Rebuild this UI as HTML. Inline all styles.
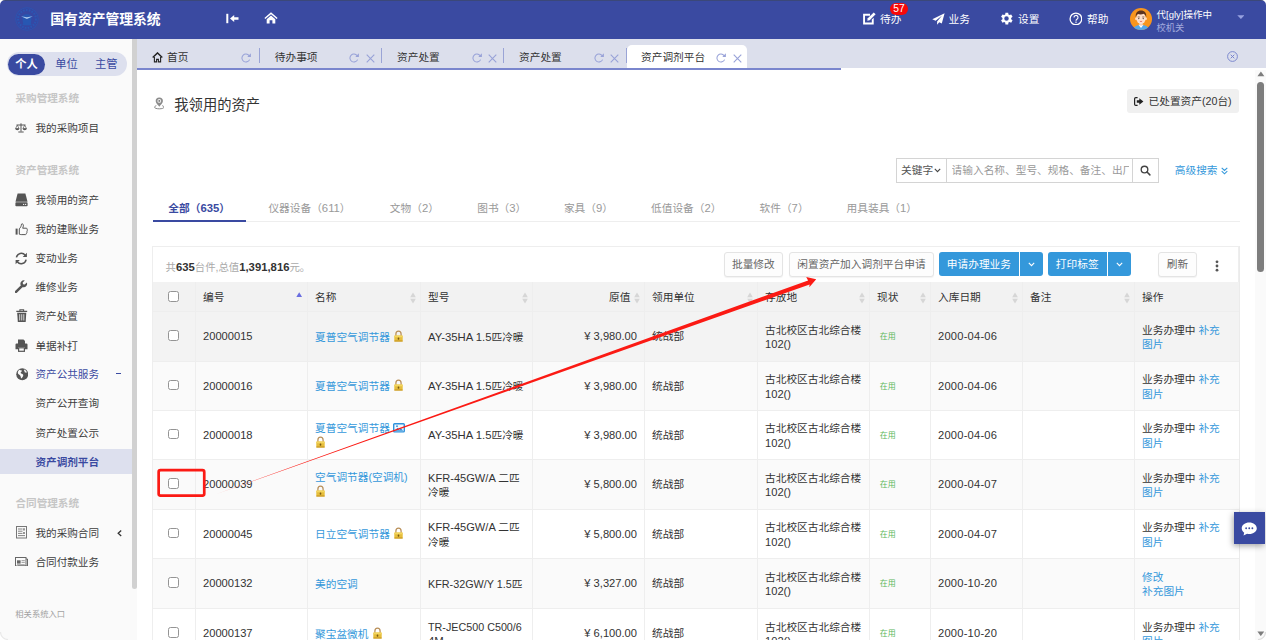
<!DOCTYPE html>
<html lang="zh-CN">
<head>
<meta charset="utf-8">
<title>国有资产管理系统</title>
<style>
*{box-sizing:border-box;margin:0;padding:0}
html,body{width:1266px;height:640px;overflow:hidden;background:#fff}
body{font-family:"Liberation Sans","Noto Sans CJK SC",sans-serif;font-size:10.7px;color:#333;position:relative}
.abs{position:absolute}
svg{display:block}
/* header */
#hdr{position:absolute;left:0;top:0;width:1266px;height:38.6px;background:#3a4aa1}
#hdr .t{position:absolute;color:#fff;white-space:nowrap}
#title{left:50.3px;top:9.1px;font-size:13.8px;font-weight:bold;line-height:22px}
.hi{position:absolute;color:#fff;font-size:10.7px;line-height:14px;top:11.5px;white-space:nowrap}
/* sidebar */
#side{position:absolute;left:0;top:39px;width:137px;height:601px;background:#fafafa}
#sthumb{position:absolute;left:132px;top:39px;width:5px;height:550px;background:#d1d1d1;border-radius:0 0 3px 3px}
#pill{position:absolute;left:7px;top:52px;width:120px;height:24px;border-radius:13px;background:#dde0ee}
#pill span{position:absolute;top:0;line-height:25.4px;font-size:11.3px;color:#3a4aa1}
#pill .on{left:1px;top:2px;width:37px;height:21px;line-height:21.6px;border-radius:11px;background:#3a4aa1;color:#fff;font-weight:bold;text-align:center}
.sg{position:absolute;left:15.5px;font-size:10.6px;font-weight:bold;color:#c6c6c6;line-height:14px;white-space:nowrap}
.si{position:absolute;left:35.5px;font-size:10.6px;color:#3d3d3d;line-height:14px;white-space:nowrap}
.sic{position:absolute;left:15px}
/* tabs */
#tabs{position:absolute;left:137px;top:39px;width:1129px;height:29px;background:#dcdfec}
#tabline{position:absolute;left:137px;top:67.5px;width:704px;height:2px;background:#7a86cd}
.tb{position:absolute;top:41.5px;height:29px;line-height:30px;font-size:10.7px;color:#333;white-space:nowrap}
.sep{position:absolute;top:47.5px;width:1px;height:15px;background:#9aa4d6}

/* content */
#ptitle{position:absolute;left:174.3px;top:94.5px;font-size:14.3px;line-height:20px;color:#333;white-space:nowrap}
#btnout{position:absolute;left:1127px;top:89px;width:112px;height:24px;background:#f0f0f0;border-radius:3px}
#btnout span{position:absolute;left:21.5px;top:0;line-height:25.4px;font-size:10.7px;color:#333;white-space:nowrap}
#sgrp{position:absolute;left:896px;top:158.3px;width:263px;height:24.4px;border:1px solid #d4d4d4;background:#fff}
#sgrp .k{position:absolute;left:4px;top:0;line-height:22.6px;font-size:10.7px;color:#555;white-space:nowrap}
#sgrp .ph{position:absolute;left:54.6px;top:0;width:177px;overflow:hidden;line-height:22.6px;font-size:10.7px;color:#999;white-space:nowrap}
#sgrp .v1{position:absolute;left:48.6px;top:0;width:1px;height:22.4px;background:#d4d4d4}
#sgrp .v2{position:absolute;left:234.6px;top:0;width:1px;height:22.4px;background:#d4d4d4}
#adv{position:absolute;left:1174.8px;top:163px;line-height:15px;font-size:10.7px;color:#3498db;white-space:nowrap}
.nt{position:absolute;top:200px;line-height:16px;font-size:10.7px;color:#999;white-space:nowrap}
#navline{position:absolute;left:152.7px;top:221px;width:1087px;height:1px;background:#eee}
#navon{position:absolute;left:152.7px;top:220.4px;width:93px;height:2px;background:#3a4aa1}
#panel{position:absolute;left:152.2px;top:246px;width:1087px;height:400px;border:1px solid #eee;border-bottom:0}
#sum{position:absolute;left:165.5px;top:260px;line-height:15px;font-size:10.4px;color:#aaa;white-space:nowrap}
#sum b{color:#333;font-size:11.3px}
.bt{position:absolute;top:252.2px;height:24.4px;line-height:22.6px;font-size:10.7px;text-align:center;white-space:nowrap;border-radius:3px;border:1px solid #e4e4e4;background:#fdfdfd;color:#666;box-shadow:0 1px 1px rgba(0,0,0,.05)}
.bb{position:absolute;top:252.3px;height:24.1px;line-height:24.3px;font-size:10.7px;text-align:center;white-space:nowrap;background:#3498db;color:#fff}
/* grid */
#grid{position:absolute;left:153px;top:282px;width:1086px;height:358px;overflow:hidden}
.r{position:absolute;left:0;width:1086px;height:49.45px;border-top:1px solid #eee}
.r.h{height:29px;background:#f2f2f2;border-top:0;top:0}
.c{position:absolute;top:0;height:100%;border-left:1px solid #eee;display:flex;align-items:center;padding:0 7px;font-size:10.7px;line-height:14.8px;white-space:nowrap;color:#333}
.r.h .c{font-size:10.7px;padding-top:1.6px}
.c:first-child{border-left:0}
.c>div{position:relative;top:0.8px}
.c a,.lk{color:#3498db;text-decoration:none}
.cb{display:block;width:10.6px;height:10.6px;border:1px solid #949494;border-radius:2.5px;background:#fff;margin:0 auto;position:relative;left:-0.5px;top:-0.9px}
.st{font-size:8px;color:#5cb85c;position:relative;top:1.2px;margin-left:2.8px}
.num{justify-content:flex-end}
.r.h .num{padding-right:13.6px}
.srt{position:absolute;right:4.5px;top:50%;margin-top:-5.5px}
.d{font-size:11.15px}
.m{font-size:11.4px}
.nt i{font-style:normal;font-size:11.3px}
</style>
</head>
<body>
<div id="hdr">
  <svg class="abs" style="left:14.5px;top:7px" width="24" height="24" viewBox="0 0 24 24"><circle cx="12" cy="12" r="11.3" fill="#3648a3" stroke="#2c55b1" stroke-width="0.9"/><circle cx="12" cy="12" r="8.9" fill="none" stroke="#2b57b3" stroke-width="2" stroke-dasharray="1.6 1.3"/><path d="M7.2 9.2C9 7.6 10.6 7.3 12 7.3s3 0.3 4.8 1.9l-0.9 7.4 0.9 1.6H7.2l0.9-1.6z" fill="#2757b2"/><path d="M6 9.2l5.9 1.1 5.9-1.1-5.9 2.7z" fill="#a9c6ee"/></svg>
  <div id="title" class="t">国有资产管理系统</div>

  <svg class="abs" style="left:226px;top:12.5px" width="13" height="11" viewBox="0 0 13 11"><rect x="0.3" y="0.8" width="2" height="9.4" fill="#fff"/><path d="M4 5.5l4.2-3.6v2.3h4.3v2.6H8.2v2.3z" fill="#fff"/></svg>
  <svg class="abs" style="left:264px;top:12px" width="14" height="12" viewBox="0 0 14 12"><path d="M7 0.3l6.6 5.6-0.9 1.1L7 2.3 1.3 7 0.4 5.9z" fill="#fff"/><path d="M7 3.6l4.3 3.6v4.3H8.4V8.2H5.6v3.3H2.7V7.2z" fill="#fff"/></svg>
  <svg class="abs" style="left:861.7px;top:10.8px" width="14.5" height="14.5" viewBox="0 0 13 13"><path d="M1 2.5h6.2v1.7H2.7v6.1h6.1V7.7l1.7-1.7v6H1z" fill="#fff"/><path d="M5.2 6.6l5.3-5.3 1.7 1.7-5.3 5.3-2.2 0.5z" fill="#fff"/></svg>
  <div class="hi" style="left:880px">待办</div>
  <div class="abs" style="left:890px;top:3.4px;width:18.2px;height:12px;border-radius:6px;background:#f80808;color:#fff;font-size:10.3px;line-height:12px;text-align:center">57</div>
  <svg class="abs" style="left:932px;top:13px" width="13" height="12" viewBox="0 0 13 12"><path d="M12.6 0.2L0.3 6.3l3.3 1.4 6.5-5.2-5 6v3.2l2.1-2.4 2.6 1.1z" fill="#fff"/></svg>
  <div class="hi" style="left:948.5px">业务</div>
  <svg class="abs" style="left:998.9px;top:10.8px" width="15" height="15" viewBox="0 0 24 24"><path d="M19.4 13a7.6 7.6 0 0 0 0-2l2.3-1.8-2.2-3.8-2.7 1.1a7.6 7.6 0 0 0-1.7-1L14.7 2.6h-4.4L9.9 5.5a7.6 7.6 0 0 0-1.7 1L5.5 5.4 3.3 9.2 5.6 11a7.6 7.6 0 0 0 0 2l-2.3 1.8 2.2 3.8 2.7-1.1a7.6 7.6 0 0 0 1.7 1l0.4 2.9h4.4l0.4-2.9a7.6 7.6 0 0 0 1.7-1l2.7 1.1 2.2-3.8zM12 15.6a3.6 3.6 0 1 1 0-7.2 3.6 3.6 0 0 1 0 7.2z" fill="#fff"/></svg>
  <div class="hi" style="left:1018px">设置</div>
  <svg class="abs" style="left:1068.6px;top:11.5px" width="13.8" height="13.8" viewBox="0 0 13 13"><circle cx="6.5" cy="6.5" r="5.5" fill="none" stroke="#fff" stroke-width="1.2"/><path d="M4.7 5.2a1.9 1.9 0 1 1 2.8 1.6c-0.6 0.4-0.9 0.7-0.9 1.4" fill="none" stroke="#fff" stroke-width="1.1"/><rect x="6" y="9" width="1.2" height="1.2" fill="#fff"/></svg>
  <div class="hi" style="left:1087px">帮助</div>
  <svg class="abs" style="left:1129.6px;top:8.3px" width="22" height="22" viewBox="0 0 23 23"><defs><clipPath id="avc"><circle cx="11.5" cy="11.5" r="11.5"/></clipPath></defs><g clip-path="url(#avc)"><rect width="23" height="23" fill="#f8951d"/><path d="M3.5 23c0-3.6 3-5.2 8-5.2s8 1.6 8 5.2z" fill="#56a8ea"/><path d="M8.8 17.6l2.7 3.2 2.7-3.2z" fill="#fff"/><rect x="9.8" y="14" width="3.4" height="4.4" fill="#f3cdb4"/><ellipse cx="11.5" cy="10.8" rx="5" ry="5.8" fill="#fde0cc"/><ellipse cx="6.3" cy="11.3" rx="0.9" ry="1.3" fill="#fde0cc"/><ellipse cx="16.7" cy="11.3" rx="0.9" ry="1.3" fill="#fde0cc"/><path d="M6.1 9.8c-0.7-4.6 1.8-7.3 5.4-7.3s6.1 2.7 5.4 7.3c-0.5-2-1.4-3.2-2.6-3.8-1.6 0.9-4.2 1.1-6 0.3-1.1 0.7-1.8 1.8-2.2 3.5z" fill="#5a3320"/><path d="M8 9.4h2.2M12.8 9.4H15" stroke="#5a3320" stroke-width="0.7"/><circle cx="9.2" cy="11" r="0.65" fill="#3a2a22"/><circle cx="13.8" cy="11" r="0.65" fill="#3a2a22"/><path d="M10.3 13.8q1.2 0.9 2.4 0" fill="none" stroke="#e0564e" stroke-width="0.8"/></g></svg>
  <div class="t" style="left:1156.5px;top:8px;font-size:9.5px;line-height:13px">代[gly]操作中</div>
  <div class="t" style="left:1156.5px;top:22.3px;font-size:9.3px;line-height:13px;color:#a3abde">校机关</div>
  <svg class="abs" style="left:1236.6px;top:15.4px" width="7.8" height="4.4" viewBox="0 0 9 5"><path d="M0.3 0.3h8.4L4.5 4.7z" fill="#97a2e0"/></svg>
</div>
<div id="side"></div>
<div id="sthumb"></div>
<div id="pill"><span class="on">个人</span><span style="left:48.3px">单位</span><span style="left:88px">主管</span></div>
<div id="tabs"></div>

<div class="abs" style="left:626.5px;top:45px;width:120.5px;height:23px;background:#fff;border-radius:5px 5px 0 0"></div>
<div class="tb" style="left:167px">首页</div>
<div class="tb" style="left:274.8px">待办事项</div>
<div class="tb" style="left:397px">资产处置</div>
<div class="tb" style="left:519px">资产处置</div>
<div class="tb" style="left:641px">资产调剂平台</div>
<div class="sep" style="left:259px"></div><div class="sep" style="left:381px"></div><div class="sep" style="left:503px"></div><div class="sep" style="left:625.5px"></div>
<svg class="abs" style="left:152.3px;top:52px" width="11" height="11" viewBox="0 0 11 11"><path d="M0.7 5.6L5.5 0.9 10.3 5.6" fill="none" stroke="#222" stroke-width="1.4"/><path d="M2.4 5v4.9h2.2V7.4h1.8v2.5h2.2V5" fill="none" stroke="#222" stroke-width="1.1"/></svg><svg class="abs" style="left:240.7px;top:53px" width="10.5" height="9.5" viewBox="0 0 10.5 9.5"><path d="M8.1 2.6A4 4 0 1 0 8.6 6.6" fill="none" stroke="#98a2d8" stroke-width="1.05"/><path d="M9.9 0.3v3.6H6.3z" fill="#98a2d8"/></svg><svg class="abs" style="left:349.3px;top:53px" width="10.5" height="9.5" viewBox="0 0 10.5 9.5"><path d="M8.1 2.6A4 4 0 1 0 8.6 6.6" fill="none" stroke="#98a2d8" stroke-width="1.05"/><path d="M9.9 0.3v3.6H6.3z" fill="#98a2d8"/></svg><svg class="abs" style="left:366.2px;top:53.5px" width="9" height="9" viewBox="0 0 9 9"><path d="M0.7 0.7L8.3 8.3M8.3 0.7L0.7 8.3" fill="none" stroke="#98a2d8" stroke-width="1.1"/></svg><svg class="abs" style="left:471.5px;top:53px" width="10.5" height="9.5" viewBox="0 0 10.5 9.5"><path d="M8.1 2.6A4 4 0 1 0 8.6 6.6" fill="none" stroke="#98a2d8" stroke-width="1.05"/><path d="M9.9 0.3v3.6H6.3z" fill="#98a2d8"/></svg><svg class="abs" style="left:488.2px;top:53.5px" width="9" height="9" viewBox="0 0 9 9"><path d="M0.7 0.7L8.3 8.3M8.3 0.7L0.7 8.3" fill="none" stroke="#98a2d8" stroke-width="1.1"/></svg><svg class="abs" style="left:594px;top:53px" width="10.5" height="9.5" viewBox="0 0 10.5 9.5"><path d="M8.1 2.6A4 4 0 1 0 8.6 6.6" fill="none" stroke="#98a2d8" stroke-width="1.05"/><path d="M9.9 0.3v3.6H6.3z" fill="#98a2d8"/></svg><svg class="abs" style="left:610.3px;top:53.5px" width="9" height="9" viewBox="0 0 9 9"><path d="M0.7 0.7L8.3 8.3M8.3 0.7L0.7 8.3" fill="none" stroke="#98a2d8" stroke-width="1.1"/></svg><svg class="abs" style="left:715.5px;top:53px" width="10.5" height="9.5" viewBox="0 0 10.5 9.5"><path d="M8.1 2.6A4 4 0 1 0 8.6 6.6" fill="none" stroke="#98a2d8" stroke-width="1.05"/><path d="M9.9 0.3v3.6H6.3z" fill="#98a2d8"/></svg><svg class="abs" style="left:732.6px;top:53.5px" width="9" height="9" viewBox="0 0 9 9"><path d="M0.7 0.7L8.3 8.3M8.3 0.7L0.7 8.3" fill="none" stroke="#98a2d8" stroke-width="1.1"/></svg><svg class="abs" style="left:1227.3px;top:50.9px" width="11" height="11" viewBox="0 0 11 11"><circle cx="5.5" cy="5.5" r="4.9" fill="none" stroke="#7380cc" stroke-width="0.9"/><path d="M3.7 3.7l3.6 3.6M7.3 3.7L3.7 7.3" stroke="#7380cc" stroke-width="0.95"/></svg>
<div id="tabline"></div>
<div class="sg" style="top:91.4px">采购管理系统</div>
<div class="si" style="top:121.2px">我的采购项目</div>
<div class="sg" style="top:163.2px">资产管理系统</div>
<div class="si" style="top:192.5px">我领用的资产</div>
<div class="si" style="top:222.3px">我的建账业务</div>
<div class="si" style="top:251.2px">变动业务</div>
<div class="si" style="top:279.7px">维修业务</div>
<div class="si" style="top:309.4px">资产处置</div>
<div class="si" style="top:338.5px">单据补打</div>
<div class="si" style="top:367.2px;color:#3a4aa1">资产公共服务</div>
<div class="si" style="top:396.3px">资产公开查询</div>
<div class="si" style="top:425.8px">资产处置公示</div>
<div class="abs" style="left:0;top:449px;width:132px;height:25px;background:#dde0ee"></div>
<div class="si" style="top:454.9px;color:#3a4aa1;font-weight:bold">资产调剂平台</div>
<div class="sg" style="top:496.2px">合同管理系统</div>
<div class="si" style="top:525.7px">我的采购合同</div>
<div class="si" style="top:554.8px">合同付款业务</div>
<div class="abs" style="left:15.3px;top:608px;font-size:8.3px;line-height:12px;color:#a2a2a2">相关系统入口</div>
<div class="abs" style="left:116.3px;top:373.2px;width:4.6px;height:1.2px;background:#3a4aa1"></div>
<svg class="abs" style="left:116.6px;top:529.6px" width="5" height="7" viewBox="0 0 5 7"><path d="M4.2 0.6L1.2 3.3 4.2 6" fill="none" stroke="#333" stroke-width="1.3"/></svg>

<svg class="abs" style="left:153.8px;top:97.4px" width="10.6" height="12.4" viewBox="0 0 11 13"><path d="M5.5 0.4a3.8 3.8 0 0 1 3.8 3.8c0 2.3-2.3 3.9-3.8 6C4 8.1 1.7 6.5 1.7 4.2A3.8 3.8 0 0 1 5.5 0.4z" fill="#8c8c8c"/><circle cx="5.5" cy="4.1" r="2" fill="#f4f4f4"/><circle cx="5.5" cy="4.1" r="1" fill="#777"/><path d="M2.4 9.1C1.2 9.5 0.5 10 0.5 10.7c0 1 2.2 1.7 5 1.7s5-0.7 5-1.7c0-0.7-0.7-1.2-1.9-1.6" fill="none" stroke="#777" stroke-width="0.9"/></svg>
<div id="ptitle">我领用的资产</div>
<div id="btnout"><svg class="abs" style="left:7.3px;top:8.3px" width="10" height="9" viewBox="0 0 10 9"><path d="M3.6 0.6H1.8A1.2 1.2 0 0 0 0.6 1.8v5.4a1.2 1.2 0 0 0 1.2 1.2h1.8" fill="none" stroke="#222" stroke-width="1.2"/><path d="M5.3 1.3L9.4 4.5 5.3 7.7V5.7H2.8V3.3h2.5z" fill="#222"/></svg><span>已处置资产(20台)</span></div>
<div id="sgrp"><span class="k">关键字</span><svg class="abs" style="left:36.5px;top:9px" width="7" height="5" viewBox="0 0 7 5"><path d="M0.8 0.8L3.5 3.6 6.2 0.8" fill="none" stroke="#444" stroke-width="1.1"/></svg><i class="v1"></i><span class="ph">请输入名称、型号、规格、备注、出厂编号</span><i class="v2"></i><svg class="abs" style="left:243px;top:5.5px" width="11" height="11" viewBox="0 0 11 11"><circle cx="4.5" cy="4.5" r="3.3" fill="none" stroke="#444" stroke-width="1.35"/><path d="M7 7l2.9 2.9" stroke="#444" stroke-width="1.5" stroke-linecap="round"/></svg></div>
<div id="adv">高级搜索 <svg style="display:inline-block;vertical-align:-1px" width="7" height="8" viewBox="0 0 7 8"><path d="M0.7 0.8L3.5 3.4 6.3 0.8M0.7 4.2L3.5 6.8 6.3 4.2" fill="none" stroke="#3498db" stroke-width="1.1"/></svg></div>
<div class="nt" style="left:168.3px;color:#3a4aa1;font-weight:bold">全部（<i>635</i>）</div><div class="nt" style="left:268.4px">仪器设备（<i>611</i>）</div><div class="nt" style="left:389.8px">文物（<i>2</i>）</div><div class="nt" style="left:477.2px">图书（<i>3</i>）</div><div class="nt" style="left:563.9px">家具（<i>9</i>）</div><div class="nt" style="left:651px">低值设备（<i>2</i>）</div><div class="nt" style="left:759.5px">软件（<i>7</i>）</div><div class="nt" style="left:846.6px">用具装具（<i>1</i>）</div>
<div id="navline"></div><div id="navon"></div>
<div id="panel"></div>
<div id="sum">共<b>635</b>台件,总值<b>1,391,816</b>元。</div>
<div class="bt" style="left:724px;width:58.7px">批量修改</div>
<div class="bt" style="left:789px;width:145px">闲置资产加入调剂平台申请</div>
<div class="bb" style="left:938.7px;width:80.5px;border-radius:3px 0 0 3px">申请办理业务</div>
<div class="bb" style="left:1020.3px;width:22.5px;border-radius:0 3px 3px 0"><svg class="abs" style="left:8px;top:9.5px" width="7" height="5" viewBox="0 0 7 5"><path d="M0.8 0.8L3.5 3.6 6.2 0.8" fill="none" stroke="#fff" stroke-width="1.1"/></svg></div>
<div class="bb" style="left:1047.8px;width:58.9px;border-radius:3px 0 0 3px">打印标签</div>
<div class="bb" style="left:1108.3px;width:22.5px;border-radius:0 3px 3px 0"><svg class="abs" style="left:7.5px;top:9.5px" width="7" height="5" viewBox="0 0 7 5"><path d="M0.8 0.8L3.5 3.6 6.2 0.8" fill="none" stroke="#fff" stroke-width="1.1"/></svg></div>
<div class="bt" style="left:1158.4px;width:38.2px">刷新</div>
<svg class="abs" style="left:1214.5px;top:260px" width="4" height="12" viewBox="0 0 4 12"><circle cx="2" cy="1.8" r="1.4" fill="#555"/><circle cx="2" cy="6" r="1.4" fill="#555"/><circle cx="2" cy="10.2" r="1.4" fill="#555"/></svg>
<div id="grid">
<div class="r h"><div class="c " style="left:0px;width:42px"><span class="cb"></span></div><div class="c " style="left:42px;width:112px">编号<svg class="srt" width="6.4" height="5.4" viewBox="0 0 6.4 5.4" style="margin-top:-4.7px;right:4.2px"><path d="M3.2 0.2L6.2 5.2H0.2z" fill="#6a6ee0"/></svg></div><div class="c " style="left:154px;width:113px">名称<svg class="srt" width="6" height="12" viewBox="0 0 6 12" style="margin-top:-4.8px"><path d="M3 0.4L5.8 5.2H0.2z" fill="#d6d6d6"/><path d="M3 11.6L5.8 6.8H0.2z" fill="#d6d6d6"/></svg></div><div class="c " style="left:267px;width:112px">型号<svg class="srt" width="6" height="12" viewBox="0 0 6 12" style="margin-top:-4.8px"><path d="M3 0.4L5.8 5.2H0.2z" fill="#d6d6d6"/><path d="M3 11.6L5.8 6.8H0.2z" fill="#d6d6d6"/></svg></div><div class="c num"  style="left:379px;width:112px">原值<svg class="srt" width="6" height="12" viewBox="0 0 6 12" style="margin-top:-4.8px"><path d="M3 0.4L5.8 5.2H0.2z" fill="#d6d6d6"/><path d="M3 11.6L5.8 6.8H0.2z" fill="#d6d6d6"/></svg></div><div class="c " style="left:491px;width:113px">领用单位<svg class="srt" width="6" height="12" viewBox="0 0 6 12" style="margin-top:-4.8px"><path d="M3 0.4L5.8 5.2H0.2z" fill="#d6d6d6"/><path d="M3 11.6L5.8 6.8H0.2z" fill="#d6d6d6"/></svg></div><div class="c " style="left:604px;width:112px">存放地<svg class="srt" width="6" height="12" viewBox="0 0 6 12" style="margin-top:-4.8px"><path d="M3 0.4L5.8 5.2H0.2z" fill="#d6d6d6"/><path d="M3 11.6L5.8 6.8H0.2z" fill="#d6d6d6"/></svg></div><div class="c " style="left:716px;width:61px">现状<svg class="srt" width="6" height="12" viewBox="0 0 6 12" style="margin-top:-4.8px"><path d="M3 0.4L5.8 5.2H0.2z" fill="#d6d6d6"/><path d="M3 11.6L5.8 6.8H0.2z" fill="#d6d6d6"/></svg></div><div class="c " style="left:777px;width:92px">入库日期<svg class="srt" width="6" height="12" viewBox="0 0 6 12" style="margin-top:-4.8px"><path d="M3 0.4L5.8 5.2H0.2z" fill="#d6d6d6"/><path d="M3 11.6L5.8 6.8H0.2z" fill="#d6d6d6"/></svg></div><div class="c " style="left:869px;width:112px">备注<svg class="srt" width="6" height="12" viewBox="0 0 6 12" style="margin-top:-4.8px"><path d="M3 0.4L5.8 5.2H0.2z" fill="#d6d6d6"/><path d="M3 11.6L5.8 6.8H0.2z" fill="#d6d6d6"/></svg></div><div class="c " style="left:981px;width:105px">操作</div></div>
<div class="r" style="top:29px;height:50px;background:#f3f3f3"><div class="c " style="left:0px;width:42px"><span class="cb"></span></div><div class="c " style="left:42px;width:112px"><span class="d">20000015</span></div><div class="c " style="left:154px;width:113px"><div class="lk">夏普空气调节器 <svg style="display:inline-block;vertical-align:-0.8px;margin-left:1.4px" width="9" height="12" viewBox="0 0 9 12"><path d="M1.9 6V3.9a2.6 2.9 0 0 1 5.2 0V6" fill="none" stroke="#b98f58" stroke-width="1.25"/><rect x="0.3" y="5.6" width="8.4" height="6" rx="0.6" fill="#e6be3c"/><rect x="0.3" y="5.6" width="8.4" height="1.6" rx="0.6" fill="#f3d660"/><rect x="0.3" y="10.4" width="8.4" height="1.2" rx="0.5" fill="#c4901c"/><rect x="3.7" y="7.6" width="1.6" height="2.2" rx="0.7" fill="#7a5a14"/></svg></div></div><div class="c " style="left:267px;width:112px"><div><span class="m" style="font-size:11.3px">AY-35HA 1.5</span>匹冷暖</div></div><div class="c num" style="left:379px;width:112px"><span class="d">¥ 3,980.00</span></div><div class="c " style="left:491px;width:113px">统战部</div><div class="c " style="left:604px;width:112px"><div>古北校区古北综合楼<br><span class="d">102()</span></div></div><div class="c " style="left:716px;width:61px"><span class="st">在用</span></div><div class="c " style="left:777px;width:92px"><span class="d" style="letter-spacing:.22px">2000-04-06</span></div><div class="c " style="left:869px;width:112px"></div><div class="c " style="left:981px;width:105px"><div>业务办理中&nbsp;<span class="lk">补充</span><br><span class="lk">图片</span></div></div></div>
<div class="r" style="top:79px;height:49px;background:#fafafa"><div class="c " style="left:0px;width:42px"><span class="cb"></span></div><div class="c " style="left:42px;width:112px"><span class="d">20000016</span></div><div class="c " style="left:154px;width:113px"><div class="lk">夏普空气调节器 <svg style="display:inline-block;vertical-align:-0.8px;margin-left:1.4px" width="9" height="12" viewBox="0 0 9 12"><path d="M1.9 6V3.9a2.6 2.9 0 0 1 5.2 0V6" fill="none" stroke="#b98f58" stroke-width="1.25"/><rect x="0.3" y="5.6" width="8.4" height="6" rx="0.6" fill="#e6be3c"/><rect x="0.3" y="5.6" width="8.4" height="1.6" rx="0.6" fill="#f3d660"/><rect x="0.3" y="10.4" width="8.4" height="1.2" rx="0.5" fill="#c4901c"/><rect x="3.7" y="7.6" width="1.6" height="2.2" rx="0.7" fill="#7a5a14"/></svg></div></div><div class="c " style="left:267px;width:112px"><div><span class="m" style="font-size:11.3px">AY-35HA 1.5</span>匹冷暖</div></div><div class="c num" style="left:379px;width:112px"><span class="d">¥ 3,980.00</span></div><div class="c " style="left:491px;width:113px">统战部</div><div class="c " style="left:604px;width:112px"><div>古北校区古北综合楼<br><span class="d">102()</span></div></div><div class="c " style="left:716px;width:61px"><span class="st">在用</span></div><div class="c " style="left:777px;width:92px"><span class="d" style="letter-spacing:.22px">2000-04-06</span></div><div class="c " style="left:869px;width:112px"></div><div class="c " style="left:981px;width:105px"><div>业务办理中&nbsp;<span class="lk">补充</span><br><span class="lk">图片</span></div></div></div>
<div class="r" style="top:128px;height:49px;background:#fff"><div class="c " style="left:0px;width:42px"><span class="cb"></span></div><div class="c " style="left:42px;width:112px"><span class="d">20000018</span></div><div class="c " style="left:154px;width:113px"><div class="lk">夏普空气调节器 <svg style="display:inline-block;vertical-align:-1.2px;margin-left:0.6px" width="12" height="9.6" viewBox="0 0 12 9.6"><rect x="0.7" y="0.7" width="10.6" height="8.2" rx="0.9" fill="#f2f8fd" stroke="#2f92dc" stroke-width="1.4"/><path d="M1.8 7.8l2.7-3 1.9 1.9 1.5-1.4 2.3 2.5z" fill="#2f92dc"/><circle cx="4" cy="3.2" r="0.9" fill="#2f92dc"/></svg><br><svg style="display:inline-block;vertical-align:-0.8px;margin-left:1.4px" width="9" height="12" viewBox="0 0 9 12"><path d="M1.9 6V3.9a2.6 2.9 0 0 1 5.2 0V6" fill="none" stroke="#b98f58" stroke-width="1.25"/><rect x="0.3" y="5.6" width="8.4" height="6" rx="0.6" fill="#e6be3c"/><rect x="0.3" y="5.6" width="8.4" height="1.6" rx="0.6" fill="#f3d660"/><rect x="0.3" y="10.4" width="8.4" height="1.2" rx="0.5" fill="#c4901c"/><rect x="3.7" y="7.6" width="1.6" height="2.2" rx="0.7" fill="#7a5a14"/></svg></div></div><div class="c " style="left:267px;width:112px"><div><span class="m" style="font-size:11.3px">AY-35HA 1.5</span>匹冷暖</div></div><div class="c num" style="left:379px;width:112px"><span class="d">¥ 3,980.00</span></div><div class="c " style="left:491px;width:113px">统战部</div><div class="c " style="left:604px;width:112px"><div>古北校区古北综合楼<br><span class="d">102()</span></div></div><div class="c " style="left:716px;width:61px"><span class="st">在用</span></div><div class="c " style="left:777px;width:92px"><span class="d" style="letter-spacing:.22px">2000-04-06</span></div><div class="c " style="left:869px;width:112px"></div><div class="c " style="left:981px;width:105px"><div>业务办理中&nbsp;<span class="lk">补充</span><br><span class="lk">图片</span></div></div></div>
<div class="r" style="top:177px;height:50px;background:#fafafa"><div class="c " style="left:0px;width:42px"><span class="cb"></span></div><div class="c " style="left:42px;width:112px"><span class="d">20000039</span></div><div class="c " style="left:154px;width:113px"><div class="lk">空气调节器(空调机)<br><svg style="display:inline-block;vertical-align:-0.8px;margin-left:1.4px" width="9" height="12" viewBox="0 0 9 12"><path d="M1.9 6V3.9a2.6 2.9 0 0 1 5.2 0V6" fill="none" stroke="#b98f58" stroke-width="1.25"/><rect x="0.3" y="5.6" width="8.4" height="6" rx="0.6" fill="#e6be3c"/><rect x="0.3" y="5.6" width="8.4" height="1.6" rx="0.6" fill="#f3d660"/><rect x="0.3" y="10.4" width="8.4" height="1.2" rx="0.5" fill="#c4901c"/><rect x="3.7" y="7.6" width="1.6" height="2.2" rx="0.7" fill="#7a5a14"/></svg></div></div><div class="c " style="left:267px;width:112px"><div><span class="m" style="font-size:11.1px">KFR-45GW/A </span>二匹<br>冷暖</div></div><div class="c num" style="left:379px;width:112px"><span class="d">¥ 5,800.00</span></div><div class="c " style="left:491px;width:113px">统战部</div><div class="c " style="left:604px;width:112px"><div>古北校区古北综合楼<br><span class="d">102()</span></div></div><div class="c " style="left:716px;width:61px"><span class="st">在用</span></div><div class="c " style="left:777px;width:92px"><span class="d" style="letter-spacing:.22px">2000-04-07</span></div><div class="c " style="left:869px;width:112px"></div><div class="c " style="left:981px;width:105px"><div>业务办理中&nbsp;<span class="lk">补充</span><br><span class="lk">图片</span></div></div></div>
<div class="r" style="top:227px;height:49px;background:#fff"><div class="c " style="left:0px;width:42px"><span class="cb"></span></div><div class="c " style="left:42px;width:112px"><span class="d">20000045</span></div><div class="c " style="left:154px;width:113px"><div class="lk">日立空气调节器 <svg style="display:inline-block;vertical-align:-0.8px;margin-left:1.4px" width="9" height="12" viewBox="0 0 9 12"><path d="M1.9 6V3.9a2.6 2.9 0 0 1 5.2 0V6" fill="none" stroke="#b98f58" stroke-width="1.25"/><rect x="0.3" y="5.6" width="8.4" height="6" rx="0.6" fill="#e6be3c"/><rect x="0.3" y="5.6" width="8.4" height="1.6" rx="0.6" fill="#f3d660"/><rect x="0.3" y="10.4" width="8.4" height="1.2" rx="0.5" fill="#c4901c"/><rect x="3.7" y="7.6" width="1.6" height="2.2" rx="0.7" fill="#7a5a14"/></svg></div></div><div class="c " style="left:267px;width:112px"><div><span class="m" style="font-size:11.1px">KFR-45GW/A </span>二匹<br>冷暖</div></div><div class="c num" style="left:379px;width:112px"><span class="d">¥ 5,800.00</span></div><div class="c " style="left:491px;width:113px">统战部</div><div class="c " style="left:604px;width:112px"><div>古北校区古北综合楼<br><span class="d">102()</span></div></div><div class="c " style="left:716px;width:61px"><span class="st">在用</span></div><div class="c " style="left:777px;width:92px"><span class="d" style="letter-spacing:.22px">2000-04-07</span></div><div class="c " style="left:869px;width:112px"></div><div class="c " style="left:981px;width:105px"><div>业务办理中&nbsp;<span class="lk">补充</span><br><span class="lk">图片</span></div></div></div>
<div class="r" style="top:276px;height:50px;background:#fafafa"><div class="c " style="left:0px;width:42px"><span class="cb"></span></div><div class="c " style="left:42px;width:112px"><span class="d">20000132</span></div><div class="c " style="left:154px;width:113px"><div class="lk">美的空调</div></div><div class="c " style="left:267px;width:112px"><div><span class="m" style="font-size:10.8px">KFR-32GW/Y 1.5</span>匹</div></div><div class="c num" style="left:379px;width:112px"><span class="d">¥ 3,327.00</span></div><div class="c " style="left:491px;width:113px">统战部</div><div class="c " style="left:604px;width:112px"><div>古北校区古北综合楼<br><span class="d">102()</span></div></div><div class="c " style="left:716px;width:61px"><span class="st">在用</span></div><div class="c " style="left:777px;width:92px"><span class="d" style="letter-spacing:.22px">2000-10-20</span></div><div class="c " style="left:869px;width:112px"></div><div class="c " style="left:981px;width:105px"><div><span class="lk">修改<br>补充图片</span></div></div></div>
<div class="r" style="top:326px;height:50px;background:#fff"><div class="c " style="left:0px;width:42px"><span class="cb"></span></div><div class="c " style="left:42px;width:112px"><span class="d">20000137</span></div><div class="c " style="left:154px;width:113px"><div class="lk">聚宝盆微机 <svg style="display:inline-block;vertical-align:-0.8px;margin-left:1.4px" width="9" height="12" viewBox="0 0 9 12"><path d="M1.9 6V3.9a2.6 2.9 0 0 1 5.2 0V6" fill="none" stroke="#b98f58" stroke-width="1.25"/><rect x="0.3" y="5.6" width="8.4" height="6" rx="0.6" fill="#e6be3c"/><rect x="0.3" y="5.6" width="8.4" height="1.6" rx="0.6" fill="#f3d660"/><rect x="0.3" y="10.4" width="8.4" height="1.2" rx="0.5" fill="#c4901c"/><rect x="3.7" y="7.6" width="1.6" height="2.2" rx="0.7" fill="#7a5a14"/></svg></div></div><div class="c " style="left:267px;width:112px"><div><span class="m" style="font-size:10.75px">TR-JEC500 C500/6</span><br><span class="m">4M</span></div></div><div class="c num" style="left:379px;width:112px"><span class="d">¥ 6,100.00</span></div><div class="c " style="left:491px;width:113px">统战部</div><div class="c " style="left:604px;width:112px"><div>古北校区古北综合楼<br><span class="d">102()</span></div></div><div class="c " style="left:716px;width:61px"><span class="st">在用</span></div><div class="c " style="left:777px;width:92px"><span class="d" style="letter-spacing:.22px">2000-10-20</span></div><div class="c " style="left:869px;width:112px"></div><div class="c " style="left:981px;width:105px"><div>业务办理中&nbsp;<span class="lk">补充</span><br><span class="lk">图片</span></div></div></div>
</div>
<svg class="abs" style="left:15px;top:122.7px" width="12" height="10" viewBox="0 0 12 10"><path d="M6 0.3v8.2M1.5 2h9M3.3 9h5.4" stroke="#555" stroke-width="1" fill="none"/><path d="M2.3 2.2L0.5 5.6h3.6zM9.7 2.2L7.9 5.6h3.6z" fill="none" stroke="#555" stroke-width="0.7"/><path d="M0.3 5.6a2 1.6 0 0 0 4 0zM7.7 5.6a2 1.6 0 0 0 4 0z" fill="#555"/></svg>
<svg class="abs" style="left:15px;top:192.5px" width="13" height="14" viewBox="0 0 13 14"><path d="M2.6 0.5h7.8l2.1 8.2h-12z" fill="#555"/><rect x="0.4" y="9.3" width="12.2" height="4" rx="0.8" fill="#555"/><rect x="8" y="10.9" width="1.2" height="1" fill="#fafafa"/><rect x="10" y="10.9" width="1.2" height="1" fill="#fafafa"/></svg>
<svg class="abs" style="left:15px;top:222.5px" width="13" height="13" viewBox="0 0 13 13"><rect x="0.6" y="5.6" width="2" height="6" fill="#555"/><path d="M4.3 11.2V5.8C5.6 4.6 6.3 3 6.5 1.2c0.1-0.7 1.8-0.5 1.9 1 0 1.2-0.4 2.2-0.7 3h3.5c1 0 1.4 1.2 0.8 1.8 0.5 0.5 0.4 1.3-0.2 1.7 0.3 0.6 0.1 1.2-0.4 1.5 0.2 0.8-0.3 1.4-1.1 1.4H6.2c-0.7 0-1.3-0.2-1.9-0.4z" fill="none" stroke="#555" stroke-width="1"/></svg>
<svg class="abs" style="left:15.3px;top:251.7px" width="12.5" height="13" viewBox="0 0 12.5 13"><path d="M1.4 5.4A5 5 0 0 1 10.2 3.2M11.1 7.6A5 5 0 0 1 2.3 9.8" fill="none" stroke="#555" stroke-width="1.5"/><path d="M11.9 0.8v4.2H7.7zM0.6 12.2V8h4.2z" fill="#555"/></svg>
<svg class="abs" style="left:15.3px;top:280.2px" width="12.5" height="13" viewBox="0 0 12.5 13"><path d="M1 11.9L6.6 6.3" stroke="#555" stroke-width="2.5" stroke-linecap="round" fill="none"/><path d="M11.8 2.5L9.7 4.6 8 4.3 7.7 2.6 9.8 0.5A3.4 3.4 0 0 0 5.6 4.9L6.9 6.9 7.9 7.2A3.4 3.4 0 0 0 11.8 2.5z" fill="#555"/></svg>
<svg class="abs" style="left:16px;top:309.3px" width="11.5" height="13.5" viewBox="0 0 11.5 13.5"><path d="M0.3 2.4h10.9M3.9 2.2V0.7h3.7v1.5" fill="none" stroke="#555" stroke-width="1.1"/><path d="M1.2 3.8h9.1l-0.6 9.2H1.8z" fill="#555"/><path d="M3.7 5.2v6.3M5.75 5.2v6.3M7.8 5.2v6.3" stroke="#fafafa" stroke-width="0.8"/></svg>
<svg class="abs" style="left:15px;top:338.8px" width="13" height="13" viewBox="0 0 13 13"><path d="M3 0.5h5.5l1.5 1.5v3H3z" fill="#555"/><path d="M0.5 5.6a1.2 1.2 0 0 1 1.2-1.2h9.6a1.2 1.2 0 0 1 1.2 1.2v4.6H10V8H3v2.2H0.5z" fill="#555"/><rect x="3.6" y="8.8" width="5.8" height="3.5" fill="none" stroke="#555" stroke-width="1.2"/></svg>
<svg class="abs" style="left:15.5px;top:368px" width="12.5" height="12.5" viewBox="0 0 12.5 12.5"><circle cx="6.25" cy="6.25" r="6" fill="#555"/><path d="M3.2 1.8c1.2 0 1.8 0.9 2.8 0.8 0.3 0.8-0.8 1-1.2 1.6-0.4 0.7 0.2 1.3 1 1.5 1 0.2 1.7 1 1.4 2-0.3 1.1-1.1 1.7-1.6 2.8-0.9-0.6-0.7-1.7-1.1-2.6C4 6.9 2.6 6.6 2.1 5.7 1.7 4.9 1.8 3.8 2.3 3z" fill="#fafafa"/><path d="M8.1 1.6c1.3 0.5 2.4 1.5 2.9 2.8-0.7-0.1-1.3 0.3-2 0-0.6-0.3-0.2-1-0.6-1.5-0.3-0.4-0.9-0.5-0.3-1.3z" fill="#fafafa"/></svg>
<svg class="abs" style="left:16px;top:526.3px" width="11" height="12.5" viewBox="0 0 11 12.5"><rect x="0.5" y="0.5" width="10" height="11.5" fill="none" stroke="#777" stroke-width="1"/><path d="M2 3h4.5M2 5.2h4.5M2 7.4h4.5M2 9.6h7" stroke="#777" stroke-width="0.9"/><path d="M8 2.3v2.2M8 6v2" stroke="#555" stroke-width="1.2"/></svg>
<svg class="abs" style="left:14.8px;top:556.8px" width="13" height="9.5" viewBox="0 0 13 9.5"><rect x="0.5" y="0.5" width="10.5" height="8.5" fill="none" stroke="#666" stroke-width="1"/><path d="M11 2h1.5v7H3" fill="none" stroke="#666" stroke-width="1"/><rect x="2" y="3.3" width="3.6" height="3.3" fill="#666"/><path d="M6.5 3.6h3.3M6.5 5.4h3.3M2 7.7h7.8" stroke="#888" stroke-width="0.8"/></svg>
<div class="abs" style="left:0;top:0;width:1266px;height:1px;background:#3b4879"></div>
<svg class="abs" style="left:0;top:0" width="5" height="5" viewBox="0 0 5 5"><path d="M0 0h5A5 5 0 0 0 0 5z" fill="#fff"/></svg>
<svg class="abs" style="left:1261px;top:0" width="5" height="5" viewBox="0 0 5 5"><path d="M5 0H0A5 5 0 0 1 5 5z" fill="#fff"/></svg>
<div class="abs" style="left:1238.7px;top:246px;width:1px;height:394px;background:#ebebeb"></div>
<!-- annotation -->

<svg class="abs" style="left:0;top:0;pointer-events:none" width="1266" height="640" viewBox="0 0 1266 640"><rect x="158.65" y="470.1" width="45.6" height="25.5" rx="1.8" fill="none" stroke="#fb1a14" stroke-width="2.7"/><path d="M216.5 494L808.1 280.4 806.2 277 816.2 279.2 809.3 287.3 809.6 284.4z" fill="#fb1a14"/></svg>
<!-- page scrollbar -->
<div class="abs" style="left:1255px;top:69.5px;width:11px;height:571px;background:#fafafa"></div>
<div class="abs" style="left:1257.3px;top:82px;width:6.5px;height:190px;border-radius:3.5px;background:#7d7d7d"></div>
<svg class="abs" style="left:1256.8px;top:71.2px" width="7.8" height="5.8" viewBox="0 0 8 6"><path d="M4 0.6L7.6 5.4H0.4z" fill="#7d7d7d"/></svg>
<svg class="abs" style="left:1258px;top:632px" width="8" height="8" viewBox="0 0 8 8"><path d="M8 0A8 8 0 0 1 0 8H8z" fill="#fff"/><path d="M7.5 0A7.5 7.5 0 0 1 0 7.5" fill="none" stroke="#dedede" stroke-width="1.2"/></svg>
<svg class="abs" style="left:0;top:632px" width="8" height="8" viewBox="0 0 8 8"><path d="M0 0A8 8 0 0 0 8 8H0z" fill="#fff"/><path d="M0.5 0A7.5 7.5 0 0 0 8 7.5" fill="none" stroke="#e9e9e9" stroke-width="1.2"/></svg>
<svg class="abs" style="left:1257px;top:630.5px" width="7.6" height="5.8" viewBox="0 0 8 6"><path d="M4 5.4L7.6 0.6H0.4z" fill="#7d7d7d"/></svg>
<!-- chat -->
<div class="abs" style="left:1233.5px;top:512px;width:31.5px;height:31.8px;background:#3a4aa1;box-shadow:-1px 2px 6px rgba(0,0,0,.35)"><svg class="abs" style="left:7.5px;top:9.6px" width="16.5" height="14" viewBox="0 0 15 13"><path d="M7.5 0.4c3.9 0 7 2.4 7 5.4s-3.1 5.4-7 5.4c-0.7 0-1.4-0.1-2-0.2L2.2 12.6l0.6-2.7C1.4 8.9 0.5 7.4 0.5 5.8c0-3 3.1-5.4 7-5.4z" fill="#fff"/><circle cx="4.6" cy="5.8" r="0.85" fill="#3a4aa1"/><circle cx="7.5" cy="5.8" r="0.85" fill="#3a4aa1"/><circle cx="10.4" cy="5.8" r="0.85" fill="#3a4aa1"/></svg></div>
</body>
</html>
